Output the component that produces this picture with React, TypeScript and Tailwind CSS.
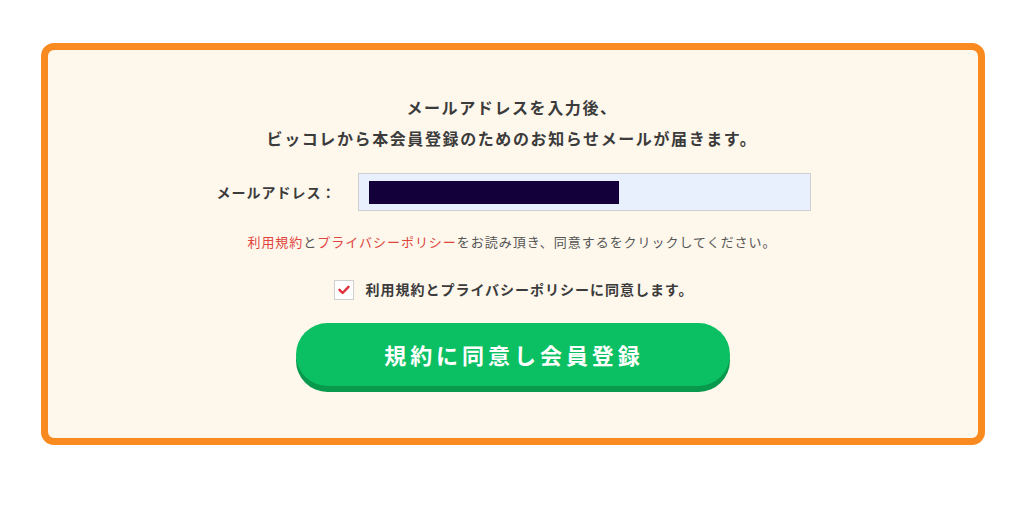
export default function App() {
  return (
    <div
      className="w-[1024px] h-[508px] bg-white pt-[43px]"
      style={{ fontFamily: '"Noto Sans CJK JP", "Noto Sans", sans-serif' }}
    >
      {/* Card */}
      <div className="ml-[41px] w-[944px] h-[402px] rounded-[13px] border-[7px] border-[#f98a1f] bg-[#fdf7ec] pt-[42px] flex flex-col items-center">
        {/* Intro */}
        <p className="text-center text-[16px] leading-[31px] font-bold text-[#3b3b3b] tracking-[0.1em] -ml-[2px]">
          メールアドレスを入力後、
          <br />
          ビッコレから本会員登録のためのお知らせメールが届きます。
        </p>

        {/* Email row */}
        <div className="mt-[19px] flex items-center ml-[1px]">
          <label className="w-[141px] text-[14px] font-bold text-[#3b3b3b] tracking-[0.07em]">
            メールアドレス：
          </label>
          <div className="w-[453px] h-[38px] border border-[#cfcfcf] bg-[#e8f0fe] flex items-center pl-[10px]">
            <div className="w-[250px] h-[23px] bg-[#13003a]" />
          </div>
        </div>

        {/* Terms notice */}
        <p className="mt-[21px] text-[13px] leading-[20px] text-[#555] tracking-[0.075em] -ml-[2px]">
          <span className="text-[#e0453d]">利用規約</span>と
          <span className="text-[#e0453d]">プライバシーポリシー</span>
          をお読み頂き、同意するをクリックしてください。
        </p>

        {/* Checkbox */}
        <div className="mt-[27px] flex items-center gap-[12px] ml-[1px]">
          <div className="w-[20px] h-[20px] bg-white border border-[#cfcfcf] flex items-center justify-center">
            <svg width="12" height="10" viewBox="0 0 12 10" fill="none">
              <path d="M1.5 4.8 4.6 8 10.5 1.8" stroke="#e0303a" strokeWidth="2.4" strokeLinecap="round" strokeLinejoin="round" />
            </svg>
          </div>
          <span className="text-[14px] font-bold text-[#3b3b3b] tracking-[0.07em]">
            利用規約とプライバシーポリシーに同意します。
          </span>
        </div>

        {/* Submit */}
        <button className="mt-[23px] w-[434px] h-[63px] rounded-full bg-[#0bbf63] shadow-[0_6px_0_#08994c] text-white text-[22px] font-bold tracking-[0.18em] pl-[2px]">
          規約に同意し会員登録
        </button>
      </div>
    </div>
  )
}
